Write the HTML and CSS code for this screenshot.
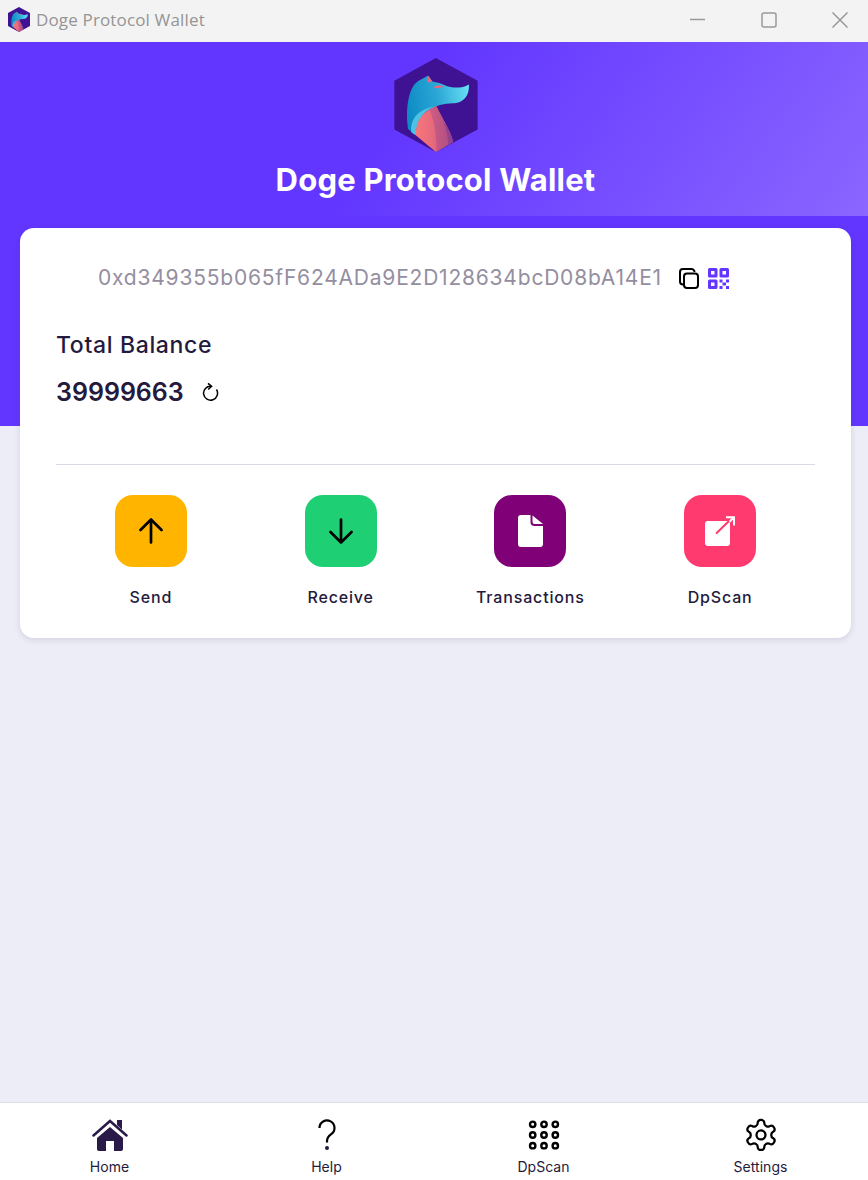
FILE: index.html
```html
<!DOCTYPE html>
<html lang="en">
<head>
<meta charset="utf-8">
<title>Doge Protocol Wallet</title>
<link rel="stylesheet" href="styles.css">
</head>
<body>
<svg class="defs" width="0" height="0" aria-hidden="true">
  <defs>
    <linearGradient id="dogBlue" x1="0" y1="0.5" x2="1" y2="0.35">
      <stop offset="0" stop-color="#0d8cc4"/>
      <stop offset="0.5" stop-color="#2ba6d6"/>
      <stop offset="1" stop-color="#66def3"/>
    </linearGradient>
    <linearGradient id="dogPink" x1="0" y1="0" x2="1" y2="0">
      <stop offset="0" stop-color="#f9777b"/>
      <stop offset="0.45" stop-color="#e76a7c"/>
      <stop offset="1" stop-color="#b04f86"/>
    </linearGradient>
    <symbol id="logo" viewBox="44 24 249 281">
      <polygon points="168,24 293,92 293,238 168,305 44,238 44,92" fill="#3f1294"/>
      <path d="M85 236C78 190 82 135 103 104C115 90 132 84 145 76L158 94C172 96 185 100 197 106C215 114 245 116 267 103C268 125 262 145 238 156C222 162 200 156 170 168C135 178 110 205 108 255Z" fill="url(#dogBlue)"/>
      <path d="M170 168C135 178 110 205 108 255L95 247C90 210 112 175 170 168Z" fill="#4cc2e4"/>
      <path d="M170 168C135 180 108 205 108 255L168 305L220 275C212 240 190 210 170 168Z" fill="url(#dogPink)"/>
      <path d="M150 180C162 210 170 250 170 304L220 275C212 240 190 210 170 168Z" fill="#a94a88" opacity="0.45"/>
      <path d="M190 215C200 235 205 260 205 283L220 275C215 250 205 232 190 215Z" fill="#8d3f8e" opacity="0.8"/>
      <path d="M145 77L157 94L143 97Z" fill="#e9667e"/>
      <path d="M160 111C170 105 181 105 192 108C182 114 170 118 160 111Z" fill="#e9667e"/>
    </symbol>
  </defs>
</svg>

<div class="app">
  <header class="titlebar">
    <div class="titlebar-left">
      <svg class="title-logo"><use href="#logo"/></svg>
      <span class="title-text">Doge Protocol Wallet</span>
    </div>
    <div class="window-controls">
      <svg class="win-btn" viewBox="0 0 16 16"><path d="M0 7.5H15"/></svg>
      <svg class="win-btn" viewBox="0 0 16 16"><rect x="1" y="1" width="14" height="14" rx="2"/></svg>
      <svg class="win-btn" viewBox="0 0 16 16"><path d="M.5.5L15.500 15.500M15.500.5L.5 15.500"/></svg>
    </div>
  </header>

  <section class="hero">
    <div class="banner">
      <svg class="hero-logo"><use href="#logo"/></svg>
      <h1 class="hero-title">Doge Protocol Wallet</h1>
    </div>
  </section>

  <main class="wallet-card">
    <div class="address-row">
      <span class="address">0xd349355b065fF624ADa9E2D128634bcD08bA14E1</span>
      <svg class="copy-icon" viewBox="0 0 20 21"><path d="M4 16.500A3 3 0 0 1 1 13.500V4A3 3 0 0 1 4 1H12.500A3 3 0 0 1 15.500 4"/><rect x="5" y="5.500" width="14" height="14.500" rx="3"/></svg>
      <svg class="qr-icon" viewBox="0 0 21 21">
        <path fill-rule="evenodd" d="M1.500 0H8A1.500 1.500 0 0 1 9.500 1.500V8A1.500 1.500 0 0 1 8 9.500H1.500A1.500 1.500 0 0 1 0 8V1.500A1.500 1.500 0 0 1 1.500 0ZM3 3V6.500H6.500V3Z"/>
        <path fill-rule="evenodd" d="M13 0H19.500A1.500 1.500 0 0 1 21 1.500V8A1.500 1.500 0 0 1 19.500 9.500H13A1.500 1.500 0 0 1 11.500 8V1.500A1.500 1.500 0 0 1 13 0ZM14.500 3V6.500H18V3Z"/>
        <path fill-rule="evenodd" d="M1.500 11.500H8A1.500 1.500 0 0 1 9.500 13V19.500A1.500 1.500 0 0 1 8 21H1.500A1.500 1.500 0 0 1 0 19.500V13A1.500 1.500 0 0 1 1.500 11.500ZM3 14.500V18H6.500V14.500Z"/>
        <rect x="11.500" y="11.500" width="3" height="3"/><rect x="18" y="11.500" width="3" height="3"/>
        <rect x="14.500" y="14.500" width="3.500" height="3"/>
        <rect x="11.500" y="18" width="3" height="3"/><rect x="18" y="18" width="3" height="3"/>
      </svg>
    </div>

    <h2 class="balance-label">Total Balance</h2>
    <div class="balance-row">
      <span class="balance-value">39999663</span>
      <svg class="refresh-icon" viewBox="0 0 18 18"><path d="M10 3.200A7 7 0 1 0 15.500 6.500"/><path d="M7 .3L10.600 3.300L7.200 6.500"/></svg>
    </div>

    <hr class="divider">

    <nav class="actions">
      <a class="action">
        <span class="action-tile tile-send">
          <svg class="tile-icon" viewBox="0 0 24 26"><path d="M12 24.500V1.500M1.500 12L12 1.500L22.500 12"/></svg>
        </span>
        <span class="action-label">Send</span>
      </a>
      <a class="action">
        <span class="action-tile tile-receive">
          <svg class="tile-icon" viewBox="0 0 24 26"><path d="M12 1.500V24.500M1.500 14L12 24.500L22.500 14"/></svg>
        </span>
        <span class="action-label">Receive</span>
      </a>
      <a class="action">
        <span class="action-tile tile-tx">
          <svg class="doc-icon" viewBox="0 0 25 32"><path d="M3 0H12.500V7A4 4 0 0 0 16.500 11H25V29A3 3 0 0 1 22 32H3A3 3 0 0 1 0 29V3A3 3 0 0 1 3 0Z"/><path d="M14.500 0.500L25 9H16.500A2 2 0 0 1 14.500 7Z"/></svg>
        </span>
        <span class="action-label">Transactions</span>
      </a>
      <a class="action">
        <span class="action-tile tile-scan">
          <svg class="ext-icon" viewBox="0 0 30 31">
            <rect class="ext-box" x="0" y="5" width="25" height="25" rx="3"/>
            <path class="ext-line" d="M11.700 17L25 4"/>
            <path class="ext-head" d="M21 1.300H29V9.500M29 1.300L24.500 5.800"/>
          </svg>
        </span>
        <span class="action-label">DpScan</span>
      </a>
    </nav>
  </main>

  <div class="spacer"></div>

  <footer class="tabbar">
    <a class="tab">
      <svg class="tab-icon" viewBox="0 0 36 34"><path class="home-fill" d="M18 9L31 20V31A2 2 0 0 1 29 33H22V23H14V33H7A2 2 0 0 1 5 31V20Z"/><path class="home-roof" d="M1.500 17.500L18 3L34.500 17.500"/><path class="home-fill" d="M25 2H30V11.500L25 7Z"/></svg>
      <span class="tab-label">Home</span>
    </a>
    <a class="tab">
      <svg class="tab-icon" viewBox="0 0 36 34"><path class="help-line" d="M10.500 10A7.500 7.500 0 1 1 22 16.300C19.500 18 18 19.500 18 23V24.500"/><circle class="help-dot" cx="18" cy="30" r="2"/></svg>
      <span class="tab-label">Help</span>
    </a>
    <a class="tab">
      <svg class="tab-icon" viewBox="0 0 36 34">
        <g class="dots">
          <circle cx="6.700" cy="6.300" r="2.700"/><circle cx="18" cy="6.300" r="2.700"/><circle cx="29.300" cy="6.300" r="2.700"/>
          <circle cx="6.700" cy="17" r="2.700"/><circle cx="18" cy="17" r="2.700"/><circle cx="29.300" cy="17" r="2.700"/>
          <circle cx="6.700" cy="27.700" r="2.700"/><circle cx="18" cy="27.700" r="2.700"/><circle cx="29.300" cy="27.700" r="2.700"/>
        </g>
      </svg>
      <span class="tab-label">DpScan</span>
    </a>
    <a class="tab">
      <svg class="tab-icon gear" viewBox="0 0 24 22.670" preserveAspectRatio="xMidYMid meet"><g transform="translate(0 -.67)"><path d="M12.220 2h-.44a2 2 0 0 0-2 2v.18a2 2 0 0 1-1 1.730l-.43.25a2 2 0 0 1-2 0l-.15-.08a2 2 0 0 0-2.730.730l-.22.38a2 2 0 0 0 .73 2.730l.15.1a2 2 0 0 1 1 1.720v.51a2 2 0 0 1-1 1.740l-.15.09a2 2 0 0 0-.73 2.730l.22.38a2 2 0 0 0 2.730.73l.15-.08a2 2 0 0 1 2 0l.43.25a2 2 0 0 1 1 1.730V20a2 2 0 0 0 2 2h.44a2 2 0 0 0 2-2v-.18a2 2 0 0 1 1-1.730l.43-.25a2 2 0 0 1 2 0l.15.08a2 2 0 0 0 2.730-.73l.22-.39a2 2 0 0 0-.73-2.730l-.15-.08a2 2 0 0 1-1-1.740v-.5a2 2 0 0 1 1-1.740l.15-.09a2 2 0 0 0 .73-2.730l-.22-.38a2 2 0 0 0-2.730-.73l-.15.08a2 2 0 0 1-2 0l-.43-.25a2 2 0 0 1-1-1.730V4a2 2 0 0 0-2-2z"/><circle cx="12" cy="12" r="3"/></g></svg>
      <span class="tab-label">Settings</span>
    </a>
  </footer>
</div>
</body>
</html>
```

FILE: styles.css
```css
* { box-sizing: border-box; }
html, body { margin: 0; padding: 0; }
body {
  width: 868px;
  height: 1180px;
  overflow: hidden;
  background: #ecedf6;
  font-family: "Inter", "Liberation Sans", sans-serif;
  color: #241a3d;
}
.defs { display: block; height: 0; }
.app { display: flex; flex-direction: column; height: 1180px; }

.titlebar {
  flex: none;
  height: 42px;
  display: flex;
  align-items: center;
  justify-content: space-between;
  background: #f3f3f3;
  padding: 0 20px 3px 8px;
}
.titlebar-left { display: flex; align-items: center; gap: 6px; }
.title-logo { width: 22px; height: 25px; }
.title-text {
  font-family: "Open Sans", "Liberation Sans", sans-serif;
  font-size: 17px;
  letter-spacing: 0.15px;
  color: #959595;
}
.window-controls { display: flex; align-items: center; gap: 55px; }
.win-btn { width: 16px; height: 16px; fill: none; stroke: #999; stroke-width: 1.500; }

.hero { flex: none; height: 384px; background: #6236ff; }
.banner {
  height: 174px;
  padding-top: 16px;
  display: flex;
  flex-direction: column;
  align-items: center;
  background: linear-gradient(125deg, #6236ff 0%, #6236ff 45%, #8b66ff 100%);
}
.hero-logo { width: 84px; height: 94px; flex: none; margin-left: 4px; }
.hero-title {
  margin: 8px 0 0 3px;
  font-size: 31px;
  line-height: 40px;
  font-weight: 700;
  letter-spacing: 0.2px;
  color: #fff;
}

.wallet-card {
  flex: none;
  width: 831px;
  height: 410px;
  margin: -198px 0 0 20px;
  padding: 36px 36px 0;
  background: #fff;
  border-radius: 14px;
  box-shadow: 0 2px 6px rgba(60, 50, 110, 0.14);
}
.address-row { display: flex; align-items: center; height: 28px; padding-left: 42px; }
.address { font-size: 21px; line-height: 28px; letter-spacing: 0.79px; color: #948e9f; }
.copy-icon { width: 20px; height: 21px; margin-left: 17px; fill: none; stroke: #000; stroke-width: 2; }
.qr-icon { width: 21px; height: 21px; margin-left: 9px; fill: #6236ff; }

.balance-label { margin: 38px 0 0; font-size: 23px; line-height: 30px; font-weight: 500; letter-spacing: 0.65px; color: #241a3d; }
.balance-row { display: flex; align-items: center; margin-top: 17px; height: 30px; }
.balance-value { font-size: 25px; line-height: 30px; font-weight: 600; color: #241a3d; }
.refresh-icon { width: 18px; height: 18px; margin-left: 17px; fill: none; stroke: #000; stroke-width: 1.500; }

.divider { border: 0; border-top: 1px solid #d9d8e8; margin: 57px 0 0; }

.actions { display: grid; grid-template-columns: repeat(4, 1fr); margin-top: 30px; }
.action { display: flex; flex-direction: column; align-items: center; gap: 20px; }
.action-tile {
  width: 72px;
  height: 72px;
  border-radius: 18px;
  display: flex;
  align-items: center;
  justify-content: center;
}
.tile-send { background: #ffb400; }
.tile-receive { background: #1fcf74; }
.tile-tx { background: #800078; }
.tile-scan { background: #ff3a6e; }
.tile-icon { width: 24px; height: 26px; fill: none; stroke: #000; stroke-width: 2.700; stroke-linecap: round; stroke-linejoin: round; }
.doc-icon { width: 25px; height: 32px; fill: #fff; }
.ext-icon { width: 30px; height: 31px; }
.ext-box { fill: #fff; }
.ext-line { fill: none; stroke: #ff3a6e; stroke-width: 2; stroke-linecap: round; }
.ext-head { fill: none; stroke: #fff; stroke-width: 2; }
.action-label { font-size: 16px; line-height: 20px; font-weight: 500; letter-spacing: 0.85px; color: #241a3d; }

.spacer { flex: 1; }

.tabbar {
  flex: none;
  height: 78px;
  display: grid;
  grid-template-columns: repeat(4, 217px);
  padding-left: 1px;
  background: #fff;
  border-top: 1px solid #dddde6;
}
.tab { display: flex; flex-direction: column; align-items: center; padding-top: 15px; }
.tab-icon { width: 36px; height: 34px; flex: none; }
.tab-label { font-size: 14px; line-height: 18px; margin-top: 6px; letter-spacing: 0.05px; color: #241a3d; }
.home-fill { fill: #2a1a4a; }
.home-roof { fill: none; stroke: #2a1a4a; stroke-width: 2.500; stroke-linecap: round; }
.help-line { fill: none; stroke: #000; stroke-width: 2.200; }
.help-dot { fill: #241a3d; }
.dots circle { fill: none; stroke: #000; stroke-width: 2.400; }
.gear { fill: none; stroke: #000; stroke-width: 1.500; }
```
